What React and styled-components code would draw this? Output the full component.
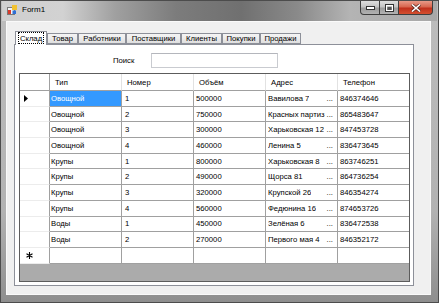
import React from "react";
import styled, { createGlobalStyle } from "styled-components";

const Global = createGlobalStyle`
  html, body { margin: 0; padding: 0; background: #fff; }
  body { width: 439px; height: 303px; overflow: hidden; font-family: "Liberation Sans", Arial, sans-serif; }
  * { box-sizing: border-box; }
`;

const Win = styled.div`
  width: 439px;
  height: 303px;
  display: flex;
  flex-direction: column;
  padding: 0 7px 7px 5px;
  background: linear-gradient(180deg, #bdbdbd 0%, #b2b2b2 70%, #8e8e8e 100%);
  border: 1px solid #4c4c4c;
`;

const TitleBar = styled.div`
  height: 20px;
  display: flex;
  align-items: flex-start;
  margin: 0 -6px 0 -4px;
  padding-left: 5px;
  background: linear-gradient(90deg, #cfcfcf 0%, #d2d2d2 14%, #a0a0a0 26%, #7c7c7c 40%, #707070 55%, #8a8a8a 68%, #b4b4b4 80%, #a8a8a8 100%);
`;

const AppIcon = styled.svg`
  margin-top: 4px;
  width: 10px;
  height: 10px;
  flex: none;
`;

const Title = styled.div`
  margin: 4px 0 0 5px;
  font-size: 8px;
  line-height: 10px;
  color: #000;
`;

const Spacer = styled.div`
  flex: 1;
`;

const Buttons = styled.div`
  display: flex;
  margin-right: 4px;
`;

const WinButton = styled.div`
  width: ${(p) => p.$w}px;
  height: 14px;
  display: flex;
  align-items: center;
  justify-content: center;
  border: 1px solid #3e3e3e;
  border-top: none;
  margin-left: -1px;
  border-radius: ${(p) => p.$r};
  background: ${(p) =>
    p.$close
      ? "linear-gradient(180deg, #e89a88 0%, #d8664f 45%, #c0301c 55%, #d4502f 100%)"
      : "linear-gradient(180deg, #dedede 0%, #c4c4c4 45%, #9c9c9c 55%, #b2b2b2 100%)"};
`;

const Client = styled.div`
  flex: 1;
  display: flex;
  flex-direction: column;
  background: #f0f0f0;
  padding: 9px 16px 8px 7px;
  border: 1px solid #fafafa;
`;

const TabStrip = styled.div`
  height: 13px;
  display: flex;
  align-items: flex-end;
  padding-left: 1px;
  font-size: 7.7px;
`;

const Tab = styled.div`
  width: ${(p) => p.$w}px;
  height: ${(p) => (p.$active ? 14 : 11)}px;
  margin-bottom: ${(p) => (p.$active ? -1 : 0)}px;
  position: relative;
  z-index: ${(p) => (p.$active ? 1 : 0)};
  display: flex;
  align-items: center;
  justify-content: center;
  border: 1px solid #8d9099;
  border-bottom: ${(p) => (p.$active ? "none" : "1px solid #8d9099")};
  background: ${(p) =>
    p.$active ? "#fff" : "linear-gradient(180deg, #f4f4f4 0%, #ececec 50%, #dedede 100%)"};
  color: #000;
  white-space: nowrap;
`;

const Focus = styled.span`
  outline: 1px dotted #000;
  outline-offset: 0;
  padding: 1px 1px 0 1px;
  line-height: 9px;
  margin-top: -1px;
`;

const TabPage = styled.div`
  flex: 1;
  display: flex;
  flex-direction: column;
  border: 1px solid #8d9099;
  background: #fff;
  padding: 8px 3px 3px 4px;
`;

const SearchRow = styled.div`
  height: 15px;
  display: flex;
  align-items: center;
  padding-left: 94px;
  gap: 17px;
  font-size: 7.7px;
`;

const SearchBox = styled.div`
  width: 127px;
  height: 15px;
  border: 1px solid #c9cbd0;
  border-top-color: #b4b6bc;
  background: #fff;
`;

const Grid = styled.div`
  flex: 1;
  margin-top: 5px;
  border: 1px solid #5c5c5c;
  background: #ababab;
  overflow: hidden;
`;

const Table = styled.div`
  display: grid;
  grid-template-columns: 30px 72px 72px 72px 72px 71px;
  grid-template-rows: 17px;
  grid-auto-rows: 15.7px;
  font-size: 7.7px;
  color: #000;
`;

const HeadCell = styled.div`
  background: #fff;
  border-bottom: 1px solid #a0a0a0;
  border-right: ${(p) => (p.$last ? "none" : p.$corner ? "1px solid #a0a0a0" : "1px solid #e2e2e2")};
  display: flex;
  align-items: center;
  padding-left: 5px;
  white-space: nowrap;
`;

const RowHead = styled.div`
  background: #fff;
  border-right: 1px solid #a0a0a0;
  border-bottom: 1px solid #ececec;
  display: flex;
  align-items: center;
  padding-left: ${(p) => (p.$star ? 6 : 4)}px;
`;

const Cell = styled.div`
  background: ${(p) => (p.$selected ? "#3399ff" : "#fff")};
  color: ${(p) => (p.$selected ? "#fff" : "#000")};
  border-right: ${(p) => (p.$last ? "none" : "1px solid #a0a0a0")};
  border-bottom: 1px solid #a0a0a0;
  display: flex;
  align-items: center;
  justify-content: space-between;
  padding: 0 4px 0 ${(p) => (p.$pad ?? 1)}px;
  white-space: nowrap;
  overflow: hidden;
`;

const Clip = styled.span`
  overflow: hidden;
`;

const Dots = styled.span`
  flex: none;
  padding-left: 1px;
`;

const rows = [
  ["Овощной", "1", "500000", "Вавилова 7", "846374646"],
  ["Овощной", "2", "750000", "Красных партиз", "865483647"],
  ["Овощной", "3", "300000", "Харьковская 12", "847453728"],
  ["Овощной", "4", "460000", "Ленина 5", "836473645"],
  ["Крупы", "1", "800000", "Харьковская 8", "863746251"],
  ["Крупы", "2", "490000", "Щорса 81", "864736254"],
  ["Крупы", "3", "320000", "Крупской 26", "846354274"],
  ["Крупы", "4", "560000", "Федюнина 16", "874653726"],
  ["Воды", "1", "450000", "Зелёная 6", "836472538"],
  ["Воды", "2", "270000", "Первого мая 4", "846352172"],
];

const tabs = [
  ["Склад", 32],
  ["Товар", 31],
  ["Работники", 48],
  ["Поставщики", 55],
  ["Клиенты", 41],
  ["Покупки", 38],
  ["Продажи", 41],
];

const headers = ["Тип", "Номер", "Объём", "Адрес", "Телефон"];

export default function App() {
  return (
    <>
      <Global />
      <Win>
        <TitleBar>
          <AppIcon viewBox="0 0 10 10">
            <rect x="0.5" y="2.5" width="7" height="7" fill="#f4f4f4" stroke="#7a7a7a" strokeWidth="1" />
            <rect x="1" y="5" width="3" height="4" fill="#d93a2b" />
            <rect x="5" y="0" width="5" height="5" fill="#f2c230" />
            <rect x="5.5" y="5.5" width="3.5" height="3.5" fill="#2f6fd6" />
          </AppIcon>
          <Title>Form1</Title>
          <Spacer />
          <Buttons>
            <WinButton $w={20} $r="0 0 0 4px">
              <svg width="9" height="4" viewBox="0 0 9 4">
                <rect x="0.5" y="0.5" width="8" height="3" fill="#fff" stroke="#333" strokeWidth="1" />
              </svg>
            </WinButton>
            <WinButton $w={20} $r="0">
              <svg width="9" height="8" viewBox="0 0 9 8">
                <rect x="0.5" y="0.5" width="8" height="7" fill="none" stroke="#333" strokeWidth="1" />
                <rect x="1.5" y="1.5" width="6" height="5" fill="none" stroke="#fff" strokeWidth="1" />
                <rect x="2.5" y="3" width="4" height="3" fill="#555" />
              </svg>
            </WinButton>
            <WinButton $w={35} $r="0 0 4px 0" $close>
              <svg width="10" height="8" viewBox="0 0 10 8">
                <path d="M1 0.5 L9 7.5 M9 0.5 L1 7.5" stroke="#5a2a20" strokeWidth="3" />
                <path d="M1 0.5 L9 7.5 M9 0.5 L1 7.5" stroke="#fff" strokeWidth="1.6" />
              </svg>
            </WinButton>
          </Buttons>
        </TitleBar>
        <Client>
          <TabStrip>
            {tabs.map(([t, w], i) =>
              i === 0 ? (
                <Tab key={t} $w={w} $active>
                  <Focus>{t}</Focus>
                </Tab>
              ) : (
                <Tab key={t} $w={w}>
                  {t}
                </Tab>
              )
            )}
          </TabStrip>
          <TabPage>
            <SearchRow>
              <span>Поиск</span>
              <SearchBox />
            </SearchRow>
            <Grid>
              <Table>
                <HeadCell $corner />
                {headers.map((h, i) => (
                  <HeadCell key={h} $last={i === headers.length - 1}>
                    {h}
                  </HeadCell>
                ))}
                {rows.map((r, ri) => (
                  <React.Fragment key={ri}>
                    <RowHead>
                      {ri === 0 && (
                        <svg width="4" height="7" viewBox="0 0 4 7">
                          <path d="M0 0 L4 3.5 L0 7 Z" fill="#000" />
                        </svg>
                      )}
                    </RowHead>
                    <Cell $selected={ri === 0}>{r[0]}</Cell>
                    <Cell $pad={3}>{r[1]}</Cell>
                    <Cell $pad={2}>{r[2]}</Cell>
                    <Cell $pad={2}>
                      <Clip>{r[3]}</Clip>
                      <Dots>...</Dots>
                    </Cell>
                    <Cell $pad={2} $last>
                      {r[4]}
                    </Cell>
                  </React.Fragment>
                ))}
                <RowHead $star>
                  <svg width="7" height="7" viewBox="0 0 7 7">
                    <path d="M3.5 0 V7 M0.5 1.8 L6.5 5.2 M6.5 1.8 L0.5 5.2" stroke="#000" strokeWidth="1.1" />
                  </svg>
                </RowHead>
                <Cell />
                <Cell />
                <Cell />
                <Cell />
                <Cell $last />
              </Table>
            </Grid>
          </TabPage>
        </Client>
      </Win>
    </>
  );
}
